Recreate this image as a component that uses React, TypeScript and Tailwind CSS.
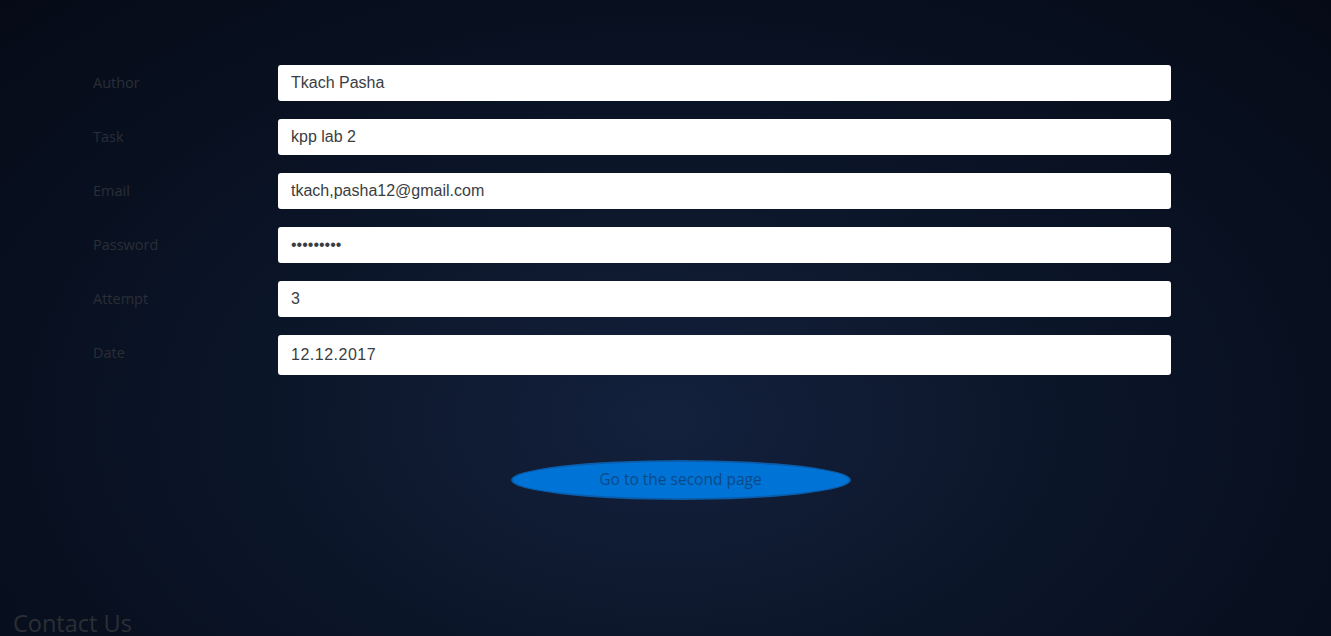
const fields = [
  { label: "Author", value: "Tkach Pasha", type: "text" },
  { label: "Task", value: "kpp lab 2", type: "text" },
  { label: "Email", value: "tkach,pasha12@gmail.com", type: "text" },
  { label: "Password", value: "123456789", type: "password" },
  { label: "Attempt", value: "3", type: "text" },
];

const App = () => {
  return (
    <div className="relative h-[636px] w-full overflow-hidden bg-[radial-gradient(ellipse_at_50%_66%,#14213d_0%,#0b1528_45%,#050a16_100%)] font-['Open_Sans',sans-serif]">
      <form className="flex flex-col gap-[18px] pt-[65px] pl-[93px]">
        {fields.map((f) => (
          <div key={f.label} className="flex items-start">
            <label className="w-[185px] pt-[7px] text-[14.5px] text-[#2a2e36]">{f.label}</label>
            <input
              type={f.type}
              defaultValue={f.value}
              readOnly
              className="h-[36px] w-[893px] rounded-[3px] bg-white px-[13px] font-['Liberation_Sans',Arial,sans-serif] text-[16px] text-[#3a3d42] outline-none"
            />
          </div>
        ))}
        <div className="flex items-start">
          <label className="w-[185px] pt-[7px] text-[14.5px] text-[#2a2e36]">Date</label>
          <input
            type="text"
            defaultValue="12.12.2017"
            readOnly
            className="h-[40px] w-[893px] rounded-[3px] bg-white px-[13px] font-['Liberation_Sans',Arial,sans-serif] text-[16px] tracking-[0.5px] text-[#3a3d42] outline-none"
          />
        </div>
      </form>

      <div className="mt-[85px] flex justify-center">
        <button className="ml-[30px] h-[40px] w-[340px] rounded-[50%] border-2 border-[#0a5dab] bg-[#0073d6] text-[15.5px] text-[#0b4a88]">
          Go to the second page
        </button>
      </div>

      <h2 className="absolute bottom-[-5px] left-[13px] text-[23.5px] font-medium text-[#2b2f35]">Contact Us</h2>
    </div>
  );
};

export default App;
